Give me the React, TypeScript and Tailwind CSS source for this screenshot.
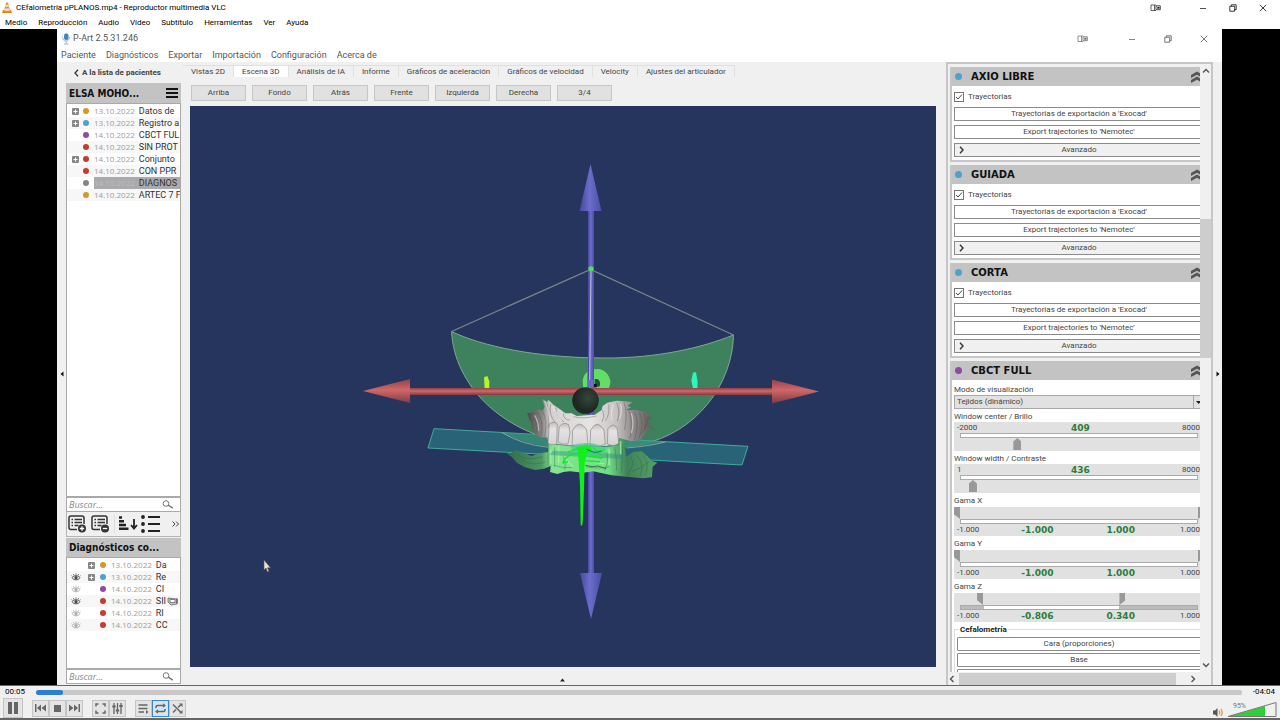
import React, { useState } from "react";

const ui = "font-[Roboto,sans-serif]";
const segoe = "font-['Open_Sans',sans-serif]";
const heading = "font-['DejaVu_Sans_Condensed','DejaVu_Sans',sans-serif]";
const verdana = "font-['DejaVu_Sans',sans-serif]";

type TreeItem = {
  date: string;
  name: string;
  color: string;
  expandable?: boolean;
  selected?: boolean;
  eye?: "on" | "off";
  badge?: boolean;
};

const ORANGE = "#d8962a";
const BLUE = "#4aa3cf";
const PURPLE = "#8e4aa8";
const RED = "#c93a2e";
const GRAY = "#858585";

const diagnostics: TreeItem[] = [
  { date: "13.10.2022", name: "Datos de", color: ORANGE, expandable: true },
  { date: "13.10.2022", name: "Registro a", color: BLUE, expandable: true },
  { date: "14.10.2022", name: "CBCT FUL", color: PURPLE },
  { date: "14.10.2022", name: "SIN PROT", color: RED },
  { date: "14.10.2022", name: "Conjunto", color: RED, expandable: true },
  { date: "14.10.2022", name: "CON PPR", color: RED },
  { date: "14.10.2022", name: "DIAGNOS", color: GRAY, selected: true },
  { date: "14.10.2022", name: "ARTEC 7 F", color: ORANGE },
];

const linked: TreeItem[] = [
  { date: "13.10.2022", name: "Da", color: ORANGE, expandable: true },
  { date: "13.10.2022", name: "Re", color: BLUE, expandable: true, eye: "on" },
  { date: "14.10.2022", name: "CI", color: PURPLE, eye: "off" },
  { date: "14.10.2022", name: "SII", color: RED, eye: "on", badge: true },
  { date: "14.10.2022", name: "RI", color: RED, eye: "off" },
  { date: "14.10.2022", name: "CC", color: RED, eye: "off" },
];

const vlcMenu = ["Medio", "Reproducción", "Audio", "Vídeo", "Subtítulo", "Herramientas", "Ver", "Ayuda"];
const appMenu = ["Paciente", "Diagnósticos", "Exportar", "Importación", "Configuración", "Acerca de"];
const tabs = [
  "Vistas 2D",
  "Escena 3D",
  "Análisis de IA",
  "Informe",
  "Gráficos de aceleración",
  "Gráficos de velocidad",
  "Velocity",
  "Ajustes del articulador",
];
const views = ["Arriba", "Fondo", "Atrás", "Frente", "Izquierda", "Derecha", "3/4"];

export default function App() {
  return (
    <div className={`flex h-screen flex-col overflow-hidden bg-white text-black ${ui}`}>
      <header>
        <div className="flex h-[15px] items-center pl-[2px] pr-[2px]">
          <ConeIcon />
          <h1 className="ml-[4px] flex-1 whitespace-nowrap text-[8px] leading-[15px]">
            CEfalometria pPLANOS.mp4 - Reproductor multimedia VLC
          </h1>
          <WindowButtons className="w-[30px]" castClass="mr-[18px]" color="#222" />
        </div>
        <nav className="flex h-[14px] items-center gap-[11px] pl-[5px] pt-px text-[8px]">
          {vlcMenu.map((m) => (
            <button key={m} className="leading-[14px]">{m}</button>
          ))}
        </nav>
      </header>
      <div className="flex min-h-0 flex-1 bg-black pl-[57px] pr-[58px]">
        <PArt />
      </div>
      <VlcControls />
    </div>
  );
}

function WindowButtons({ className, castClass, color }: { className: string; castClass: string; color: string }) {
  const base = `flex h-[15px] items-center justify-center ${className}`;
  return (
    <div className="flex">
      <button aria-label="Transmitir" className={`${base} ${castClass}`}>
        <svg width="11" height="8" viewBox="0 0 11 8" fill="none" stroke={color}>
          <path d="M6 1H1v5.500h5M4.500 1v5.500" strokeWidth=".7" />
          <path d="M6 1.800h4.300v3.900H6z" strokeWidth=".8" />
          <path d="M7.500 3h1.800v1.600H7.500z" fill={color} strokeWidth=".3" />
        </svg>
      </button>
      <button aria-label="Minimizar" className={base}>
        <svg width="8" height="8" viewBox="0 0 8 8" stroke={color}><path d="M1 4.500h6" strokeWidth=".8" /></svg>
      </button>
      <button aria-label="Restaurar" className={base}>
        <svg width="8" height="8" viewBox="0 0 8 8" fill="none" stroke={color} strokeWidth=".9">
          <path d="M.8 2.300h4.900v4.900H.8zM2.300 2.300V.8h4.900v4.900H5.700" />
        </svg>
      </button>
      <button aria-label="Cerrar" className={base}>
        <svg width="8" height="8" viewBox="0 0 8 8" stroke={color} strokeWidth=".9"><path d="M.8.8l6.400 6.400M7.200.8L.8 7.200" /></svg>
      </button>
    </div>
  );
}

function ConeIcon() {
  return (
    <svg width="10" height="12" viewBox="0 0 20 24">
      <path d="M2 16h16l2 6H0z" fill="#e8801c" />
      <path d="M8.500 1h3l5 17c-3 2-10 2-13 0z" fill="#f08a24" />
      <path d="M7.300 5.500h5.400l1.300 4H6zM5 13h10l1 3.500c-3 1.500-9 1.500-12 0z" fill="#e9e4dd" />
    </svg>
  );
}

function PArt() {
  return (
    <div className="flex min-w-0 flex-1 flex-col bg-[#f0f0f0]">
      <div className="flex h-[19px] items-center bg-white pl-[4px] text-[#555]">
        <svg width="10" height="12" viewBox="0 0 20 24">
          <rect x="6" y="1" width="9" height="13" rx="4" fill="#3f83c4" />
          <path d="M3 8c0 11 14 11 14 0M10.500 16v5M6 22h9" fill="none" stroke="#8fb6dd" strokeWidth="2" />
          <path d="M1 4h3M1 8h3" stroke="#cfdcec" strokeWidth="2" />
        </svg>
        <div className="ml-[2px] flex-1 text-[9px]">P-Art 2.5.31.246</div>
        <WindowButtons className="w-9" castClass="mr-[14px]" color="#666" />
      </div>
      <nav className="flex h-[14px] items-center gap-[10px] bg-white pl-[4px] text-[9px] text-[#555]">
        {appMenu.map((m) => (
          <button key={m} className="leading-[14px]">{m}</button>
        ))}
      </nav>
      <div className="flex min-h-0 flex-1 text-[8px] text-[#444]">
        <SideHandle dir="left" />
        <Sidebar />
        <Scene />
        <Properties />
        <SideHandle dir="right" />
      </div>
    </div>
  );
}

function SideHandle({ dir }: { dir: "left" | "right" }) {
  return (
    <button aria-label="Contraer panel" className="flex w-[9px] shrink-0 items-center justify-center">
      <svg width="4" height="6" viewBox="0 0 4 6">
        <path d={dir === "left" ? "M3.500.5v5L.5 3z" : "M.5.5v5l3-2.500z"} fill="#111" />
      </svg>
    </button>
  );
}

function Sidebar() {
  return (
    <aside className="flex w-[115px] shrink-0 flex-col pb-px pt-[4px]">
      <a href="#pacientes" className="flex h-[14px] items-center gap-[3px] pl-[8px] font-bold">
        <svg width="5" height="8" viewBox="0 0 5 8" fill="none" stroke="#333" strokeWidth="1.300"><path d="M4 .8L1 4l3 3.200" /></svg>
        A la lista de pacientes
      </a>
      <div className="mt-[3px] flex h-[20px] items-center justify-between bg-[#c3c3c3] px-[3px]">
        <h2 className={`whitespace-nowrap text-[10px] font-bold text-[#111] ${heading}`}>ELSA MOHO...</h2>
        <button aria-label="Menú">
          <svg width="12" height="10" viewBox="0 0 12 10" stroke="#111" strokeWidth="1.800"><path d="M0 1h12M0 5h12M0 9h12" /></svg>
        </button>
      </div>
      <ul className="min-h-0 flex-1 overflow-hidden border border-[#a9a9a9] bg-white pt-px">
        {diagnostics.map((item, i) => (
          <li key={i} className={`flex h-3 items-center whitespace-nowrap ${i % 2 ? "bg-[#f7f7f7]" : ""}`}>
            <span className="flex w-[16px] shrink-0 justify-center">{item.expandable && <Expander />}</span>
            <Dot color={item.color} />
            <ItemText item={item} className="ml-[5px] flex-1" />
          </li>
        ))}
      </ul>
      <SearchBox id="search-diagnostics" />
      <div className="flex h-[25px] items-center border border-t-0 border-[#b5b5b5] px-[1px]">
        <button aria-label="Añadir grupo"><ListIcon sign="plus" /></button>
        <button aria-label="Quitar grupo" className="ml-[4px]"><ListIcon sign="minus" /></button>
        <button aria-label="Ordenar" className="ml-[4px] border-l border-[#ddd] pl-[3px]">
          <svg width="20" height="18" viewBox="0 0 20 18" stroke="#222" strokeWidth="2.400" fill="none">
            <path d="M1 2.500h3M1 6.200h5M1 10h7M1 13.800h9.500" />
            <path d="M16 4v9M13 10l3 3.500 3-3.500" strokeWidth="1.800" />
          </svg>
        </button>
        <button aria-label="Lista" className="ml-[3px]">
          <svg width="19" height="18" viewBox="0 0 19 18" stroke="#222" strokeWidth="1.800" fill="#111">
            <path d="M7 2h12M7 9h12M7 16h12" />
            <circle cx="2" cy="2" r="1" /><circle cx="2" cy="9" r="1" /><circle cx="2" cy="16" r="1" />
          </svg>
        </button>
        <button aria-label="Más" className="ml-auto">
          <svg width="7" height="6" viewBox="0 0 7 6" fill="none" stroke="#444"><path d="M.5.5L3 3 .5 5.500M4 .5L6.500 3 4 5.500" /></svg>
        </button>
      </div>
      <h2 className={`mt-[1px] flex h-[19px] items-center whitespace-nowrap bg-[#c3c3c3] px-[3px] text-[10px] font-bold text-[#111] ${heading}`}>
        Diagnósticos co...
      </h2>
      <ul className="h-[112px] shrink-0 overflow-hidden border border-[#a9a9a9] bg-white pt-px">
        {linked.map((item, i) => (
          <li key={i} className={`flex h-3 items-center whitespace-nowrap pl-[4px] ${i % 2 ? "bg-[#f7f7f7]" : ""}`}>
            <span className="w-[11px] shrink-0">{item.eye && <Eye on={item.eye === "on"} />}</span>
            <span className="flex w-[18px] shrink-0 justify-center">{item.expandable && <Expander />}</span>
            <Dot color={item.color} />
            <ItemText item={item} className="ml-[5px] w-[56px]" />
            {item.badge && (
              <svg width="12" height="9" viewBox="0 0 12 9" fill="#ccc" stroke="#666" strokeWidth=".8">
                <path d="M1 1l9 1v5l-6 1-3-3z" /><path d="M3 2.500h5v3H3z" fill="#fff" /><path d="M10 1.500v5" strokeWidth="1.500" />
              </svg>
            )}
          </li>
        ))}
      </ul>
      <SearchBox id="search-linked" />
    </aside>
  );
}

function ItemText({ item, className }: { item: TreeItem; className: string }) {
  return (
    <span className={`flex items-center gap-[4px] leading-3 ${className} ${item.selected ? "bg-[#aaaaac]" : ""}`}>
      <span className={`text-[8px] ${segoe} ${item.selected ? "text-[#bcbcbc]" : "text-[#9c9c9c]"}`}>{item.date}</span>
      <span className="text-[9px] text-[#333]">{item.name}</span>
    </span>
  );
}

function Dot({ color }: { color: string }) {
  return <span className="size-[6px] shrink-0 rounded-full" style={{ backgroundColor: color }} />;
}

function Expander() {
  return (
    <button aria-label="Expandir" className="flex">
      <svg width="7" height="7" viewBox="0 0 7 7"><rect width="7" height="7" rx="1" fill="#868686" /><path d="M3.500 1.500v4M1.500 3.500h4" stroke="#fff" /></svg>
    </button>
  );
}

function Eye({ on }: { on: boolean }) {
  const c = on ? "#444" : "#aaa";
  return (
    <svg width="10" height="8" viewBox="0 0 10 8" fill="none" stroke={c} strokeWidth=".9">
      <path d="M1 4.800c2-2.800 6-2.800 8 0-2 2.700-6 2.700-8 0z" />
      <circle cx="5" cy="4.800" r="1.200" fill={c} />
      <path d="M5 .3v1.500M2.300 1l.7 1.500M7.700 1L7 2.500M.5 2.500l1 1M9.500 2.500l-1 1" strokeWidth=".7" />
    </svg>
  );
}

function ListIcon({ sign }: { sign: "plus" | "minus" }) {
  return (
    <svg width="19" height="18" viewBox="0 0 19 18" fill="none" stroke="#333">
      <path d="M9 14.500H3q-2 0-2-2V3q0-2 2-2h11q2 0 2 2v6" strokeWidth="1.500" />
      <path d="M3.500 4.500h1.500M3.500 7.500h1.500M3.500 10.500h1.500M6.500 4.500h7.500M6.500 7.500h7.500M6.500 10.500h4" strokeWidth="1.300" />
      <circle cx="14" cy="13.500" r="4" fill="#333" strokeWidth="0" />
      <path d={sign === "plus" ? "M14 11.300v4.400M11.800 13.500h4.400" : "M11.800 13.500h4.400"} stroke="#fff" strokeWidth="1.300" />
    </svg>
  );
}

function SearchBox({ id }: { id: string }) {
  return (
    <label htmlFor={id} className="flex h-[15px] shrink-0 items-center border border-[#a9a9a9] bg-white px-[2px]">
      <input
        id={id}
        placeholder="Buscar..."
        className={`min-w-0 flex-1 text-[9px] italic leading-[13px] outline-none placeholder:text-[#888] ${segoe}`}
      />
      <svg width="12" height="9" viewBox="0 0 12 9" fill="none" stroke="#777" className="mr-[4px]">
        <circle cx="4" cy="3.500" r="2.800" /><path d="M6.300 5.200l4.500 3" strokeWidth="1.500" />
      </svg>
    </label>
  );
}

function Scene() {
  const [tab, setTab] = useState("Escena 3D");
  return (
    <main className="flex min-w-0 flex-1 flex-col pl-[2px] pt-[3px]">
      <div role="tablist" className="flex h-[12px] whitespace-nowrap">
        {tabs.map((t) => (
          <button
            key={t}
            role="tab"
            aria-selected={t === tab}
            onClick={() => setTab(t)}
            className={`border-r border-t border-[#e0e0e0] px-[8px] leading-[10px] ${t === tab ? "bg-white" : ""}`}
          >
            {t}
          </button>
        ))}
      </div>
      <div className="flex gap-[6px] px-[8px] pb-[5px] pt-[8px]">
        {views.map((v) => (
          <button key={v} className="h-[16px] w-[55px] border border-[#c6c6c6] bg-[#e1e1e1] leading-[14px]">
            {v}
          </button>
        ))}
      </div>
      <div className="min-h-0 flex-1 pl-[7px] pr-[10px]">
        <Viewport />
      </div>
      <button aria-label="Expandir panel inferior" className="flex h-[18px] items-end justify-center pb-[3px] pr-[4px]">
        <svg width="5" height="4" viewBox="0 0 5 4"><path d="M0 3.500h5L2.500.5z" fill="#222" /></svg>
      </button>
    </main>
  );
}

function Viewport() {
  return (
    <svg className="h-full w-full bg-[#26355d]" viewBox="190 106 746 561" role="img" aria-label="Escena 3D">
      <defs>
        <linearGradient id="shaft" x1="0" x2="1">
          <stop offset="0" stopColor="#47479a" /><stop offset=".45" stopColor="#6c6ccd" /><stop offset="1" stopColor="#4d4da3" />
        </linearGradient>
        <linearGradient id="rod" x1="0" x2="0" y1="0" y2="1">
          <stop offset="0" stopColor="#8f4149" /><stop offset=".45" stopColor="#d06868" /><stop offset="1" stopColor="#7c3a40" />
        </linearGradient>
        <linearGradient id="bone" x1="0" x2="1">
          <stop offset="0" stopColor="#4b4848" /><stop offset=".12" stopColor="#8d8989" /><stop offset=".18" stopColor="#d5d1d1" />
          <stop offset=".5" stopColor="#e6e3e3" /><stop offset=".7" stopColor="#c6c2c2" /><stop offset=".84" stopColor="#8a8686" />
          <stop offset="1" stopColor="#5b5858" />
        </linearGradient>
        <linearGradient id="tooth" x1="0" x2="0" y1="0" y2="1">
          <stop offset="0" stopColor="#c2bebe" /><stop offset=".3" stopColor="#e4e2e2" /><stop offset="1" stopColor="#d4d2d2" />
        </linearGradient>
        <linearGradient id="gum" x1="0" x2="1">
          <stop offset="0" stopColor="#2f6a4a" /><stop offset=".24" stopColor="#4d9763" /><stop offset=".31" stopColor="#83e68f" />
          <stop offset=".68" stopColor="#72dc84" /><stop offset=".8" stopColor="#3f8257" /><stop offset="1" stopColor="#55a068" />
        </linearGradient>
        <radialGradient id="ball" cx=".6" cy=".4">
          <stop offset="0" stopColor="#35483a" /><stop offset="1" stopColor="#1f2723" />
        </radialGradient>
      </defs>

      {/* guide plane */}
      <path
        d="M451.500 331.500C482 346 535 358 606 358c52 0 95-10 127.500-23-1 50-38 98-91 109-24 6-51 5-76-1-66-12-112-58-115-111.500z"
        fill="#3d825d" stroke="#83a595" strokeWidth="1"
      />
      <path d="M451.500 331.500L590.500 269.500 733.500 335" fill="none" stroke="#75888d" strokeWidth="1.300" />

      {/* vertical axis */}
      <path d="M588 210h6v390h-6z" fill="url(#shaft)" />
      <path d="M590.500 164l11 47h-22zM591 619l11-46h-22z" fill="url(#shaft)" />
      <path d="M591 272l-1.500 116" stroke="#b9bdd8" strokeWidth="1" />
      <circle cx="591" cy="269" r="2.700" fill="#55dd55" />

      <g transform="translate(420 360) scale(.3333)">
        <path d="M488 66a40 40 0 0 1 14-31v49h-12zM522 28a40 40 0 0 1 45 56h-45z" fill="#62de66" />
        <path d="M524 58c14-6 20 12 14 22h-14z" fill="#23533a" />
        <path d="M522 72h8v10h-8z" fill="#111" />
        <path d="M192 52l10-4 6 16v20h-14z" fill="#b8f22c" />
        <path d="M819 38l9-2 5 30-1 18h-13l-5-22z" fill="#2ff5bb" />

        {/* occlusal plane */}
        <path d="M42 206l942 53-18 56-942-51z" fill="#2a7380" fillOpacity=".75" stroke="#3fae9b" strokeWidth="3" />
        <path d="M246 218l360 20 130 8c-60 14-160 22-240 20-110 2-190-18-250-48z" fill="#3d9a78" opacity=".65" />
        <path d="M246 218q60 36 140 44M620 264q70-6 116-18" fill="none" stroke="#83a595" strokeWidth="3" />

        {/* upper arch */}
        <path
          d="M322 160L340 155 352 148 368 152 374 140 366 116 380 126 386 120 400 134 418 146 436 160 455 160 470 168 500 166 525 164 545 150 548 138 562 128 590 122 612 124 638 126 622 138 634 142 618 150 645 150 668 154 690 160 684 168 698 176 684 182 690 196 704 212 688 202 676 222 660 240 635 244 612 238 598 234 590 250 560 258 500 256 450 256 386 250 382 232 362 232 345 224 336 206 334 190 328 180z"
          fill="url(#bone)"
        />
        <path
          d="M334 166q20 14 16 52M350 154q22 24 14 74M368 154q16 30 6 76M380 130q12 40 4 74M392 132q-6 34 14 56M408 142q-4 24 24 44M430 160q0 20 20 20M566 134q4 30-10 48M590 128q12 30 2 56M612 126q12 34 2 84M626 150q14 34 4 86M642 154q18 30 2 86M658 158q18 30-2 78M672 162q14 28-8 62M684 170q0 20-10 40M548 150q8 20-2 36M460 170q30 8 70-2"
          fill="none" stroke="#4a4748" strokeWidth="2" opacity=".55"
        />
        <path d="M374 122q14 30 16 66M398 140q10 20 26 42M580 132q-8 24-4 50M602 132q6 24-4 46M634 160q10 30 0 60M344 166q12 20 12 46" fill="none" stroke="#f1efef" strokeWidth="4" opacity=".5" />

        {/* lower arch */}
        <path
          d="M255 276L272 280 286 270 310 278 335 288 358 280 384 276 386 252 450 258 560 262 596 256 598 236 614 240 618 290 640 276 665 274 684 290 694 302 712 308 698 320 696 352 670 355 620 350 575 346 540 338 520 334 490 338 450 334 430 336 412 342 390 336 392 318 372 326 345 330 315 322 290 308 276 292z"
          fill="url(#gum)"
        />
        <path
          d="M290 282q30 24 78 8M306 300q30 20 70 6M384 262v56M404 262v58M430 290q10 20 4 40M560 276q8 30-6 56M584 262q6 30 6 70M606 250q4 40-2 90M632 290q16 24-10 54M650 286q26 26 10 62M670 286q20 26 6 60M400 316q30 10 60 6M498 320q40 8 70 0M686 306q-20 20-50 28"
          fill="none" stroke="#2a5f41" strokeWidth="2" opacity=".6"
        />
        <path d="M392 266v46M416 258v50M568 266v50M602 244v40M440 300l20 22M520 306l34 6" stroke="#a2f5a6" strokeWidth="5" opacity=".7" />

        {/* incisors and canines */}
        <g fill="url(#tooth)" stroke="#8a8686" strokeWidth="2">
          <path d="M388 192q14-10 24 0l-2 60q-14 6-26-2z" />
          <path d="M418 200q12-16 28-6l4 24-6 34q-16 4-30-6z" />
          <path d="M564 206q16-22 28 0l4 44q-14 12-34 2z" />
          <path d="M458 210q20-36 42 0l4 42q-24 12-48 2z" />
          <path d="M512 210q20-34 40 0l4 42q-20 12-46 2z" />
        </g>
        <path d="M398 272l212 11-2 14-218-12z" fill="#2f8b84" opacity=".45" />
        <path d="M450 258q60-22 110 8l-14 26-80-4z" fill="#47c98c" opacity=".7" />

        {/* contact traces */}
        <path d="M468 262l40-6 8 14-16 12-6 28-2 80-4 100-2 8-4-4-2-120-6-104z" fill="#0df218" />
        <path d="M428 310q10-30 50-30M444 276q30-14 60-8M500 276l50-4M506 290q20-2 40 6M496 302l44 4M520 264l24 24M428 310l16-6" fill="none" stroke="#12e92a" strokeWidth="4" />
        <path d="M496 316l20 4 18-2 24 8M500 268l24 10 20-4" fill="none" stroke="#18482b" strokeWidth="2" />
      </g>

      {/* horizontal axis */}
      <path d="M408 388h365v7H408z" fill="url(#rod)" />
      <path d="M363 391l47-12v24zM819 391.500l-47-12v24z" fill="url(#rod)" />
      <path d="M590.500 380v7.500" stroke="#6c6ccd" strokeWidth="6" />
      <circle cx="585.500" cy="400.500" r="13.300" fill="url(#ball)" />

      <path d="M264 560v10l2-2 1.500 4 1.500-.7-1.500-3.500h3z" fill="#e9e4cf" stroke="#555" strokeWidth=".6" />
    </svg>
  );
}

function Properties() {
  return (
    <aside className="flex w-[267px] shrink-0 flex-col border-x-2 border-t-2 border-[#c6c6c6]">
      <div className="flex min-h-0 flex-1">
        <div className="min-w-0 flex-1 overflow-hidden pl-[2px] pt-[3px]">
          {/* content runs a little wider than the scroll area */}
          <div className="-mr-[8px] flex flex-col gap-[3px]">
            <TrajectoryCard title="AXIO LIBRE" />
            <TrajectoryCard title="GUIADA" />
            <TrajectoryCard title="CORTA" />
            <CbctCard />
          </div>
        </div>
        <div className="flex w-[11px] shrink-0 flex-col items-center bg-[#f0f0f0] py-[3px]">
          <ScrollArrow d="M1 5.500L4 2.500l3 3" label="Subir" />
          <div className="mt-[144px] h-[139px] w-[11px] bg-[#cdcdcd]" />
          <div className="flex-1" />
          <ScrollArrow d="M1 2.500l3 3 3-3" label="Bajar" />
        </div>
      </div>
      <div className="flex h-[13px] shrink-0 items-center pr-[14px]">
        <ScrollArrow d="M5.500 1L2.500 4l3 3" label="Izquierda" />
        <div className="ml-[3px] h-[12px] flex-1 bg-[#cdcdcd]" />
        <span className="w-[13px]" />
        <ScrollArrow d="M2.500 1l3 3-3 3" label="Derecha" />
      </div>
    </aside>
  );
}

function ScrollArrow({ d, label }: { d: string; label: string }) {
  return (
    <button aria-label={label}>
      <svg width="8" height="8" viewBox="0 0 8 8" fill="none" stroke="#555" strokeWidth="1.400"><path d={d} /></svg>
    </button>
  );
}

function Card({ title, color, children }: { title: string; color: string; children: React.ReactNode }) {
  return (
    <section className="border-x-2 border-b-2 border-[#c6c6c6] bg-white">
      <header className="flex h-[19px] items-center bg-[#c3c3c3] pl-[3px] pr-[3px]">
        <span className="size-[7px] rounded-full" style={{ backgroundColor: color }} />
        <h2 className={`ml-[9px] flex-1 text-[10px] font-bold text-[#111] ${verdana}`}>{title}</h2>
        <button aria-label="Contraer">
          <svg width="12" height="12" viewBox="0 0 12 12" fill="#555"><path d="M0 4l6-3.500L12 4v3L6 3.800 0 7zM0 9l6-3.500L12 9v3L6 8.800 0 12z" /></svg>
        </button>
      </header>
      {children}
    </section>
  );
}

function TrajectoryCard({ title }: { title: string }) {
  const [on, setOn] = useState(true);
  const button = "h-[14px] w-full border border-[#8a8a8a] bg-white leading-[12px]";
  return (
    <Card title={title} color={BLUE}>
      <div className="flex flex-col gap-[4px] px-[2px] pb-[3px] pt-[5px]">
        <label className="flex h-[12px] items-center gap-[4px]">
          <input
            type="checkbox"
            checked={on}
            onChange={(e) => setOn(e.target.checked)}
            className="peer size-[10px] appearance-none border border-[#777] bg-white"
          />
          <svg width="8" height="8" viewBox="0 0 8 8" fill="none" stroke="#444" className="-ml-[13px] mr-[1px] hidden peer-checked:block">
            <path d="M1 4l2 2 4-4.500" />
          </svg>
          Trayectorias
        </label>
        <button className={button}>Trayectorias de exportación a 'Exocad'</button>
        <button className={button}>Export trajectories to 'Nemotec'</button>
        <button className="relative h-[14px] w-full border border-[#8a8a8a] bg-[#f0f0f0] leading-[12px]">
          <svg width="5" height="8" viewBox="0 0 5 8" fill="none" stroke="#333" strokeWidth="1.400" className="absolute left-[4px] top-[2px]">
            <path d="M1 .8L4 4 1 7.200" />
          </svg>
          Avanzado
        </button>
      </div>
    </Card>
  );
}

function CbctCard() {
  const button = "h-[14px] w-full rounded-[1px] border border-[#8a8a8a] bg-white leading-[12px]";
  return (
    <Card title="CBCT FULL" color={PURPLE}>
      <div className="px-[2px] pb-[3px] pt-[4px]">
        <label htmlFor="mode" className="block h-[11px] leading-[11px]">Modo de visualización</label>
        <div className="flex h-[14px] border border-[#a8a8a8] bg-[#e1e1e1]">
          <select id="mode" className="min-w-0 flex-1 appearance-none pl-[2px] leading-[12px] outline-none">
            <option>Tejidos (dinámico)</option>
          </select>
          <span className="flex w-[10px] items-center justify-center border-l border-[#a8a8a8]">
            <svg width="5" height="3" viewBox="0 0 5 3"><path d="M0 0h5L2.500 3z" fill="#222" /></svg>
          </span>
        </div>
        <SingleSlider id="center" label="Window center / Brillo" min={-2000} max={8000} initial={409} />
        <SingleSlider id="width" label="Window width / Contraste" min={1} max={8000} initial={436} />
        <RangeSlider id="gx" label="Gama X" from={-1} to={1} />
        <RangeSlider id="gy" label="Gama Y" from={-1} to={1} />
        <RangeSlider id="gz" label="Gama Z" from={-0.806} to={0.34} />
        <fieldset className="mt-[2px] flex flex-col gap-[2px] border border-[#ddd] px-[2px] pt-[2px]">
          <legend className="ml-[2px] px-[1px] font-bold leading-[11px] text-[#222]">Cefalometría</legend>
          <button className={button}>Cara (proporciones)</button>
          <button className={button}>Base</button>
          <button aria-label="Análisis" className={button} />
        </fieldset>
      </div>
    </Card>
  );
}

const valueText = `text-[9px] font-bold text-[#2a7d3a] ${verdana}`;

function SingleSlider({ id, label, min, max, initial }: { id: string; label: string; min: number; max: number; initial: number }) {
  const [value, setValue] = useState(initial);
  return (
    <div>
      <label htmlFor={id} className="block h-[13px] leading-[15px]">{label}</label>
      <div className="h-[29px] bg-[#e1e1e1]">
        <div className="grid h-[11px] grid-cols-3 items-center pl-[3px]">
          <span>{min}</span>
          <output htmlFor={id} className={`text-center leading-[11px] ${valueText}`}>{value}</output>
          <span className="pr-[4px] text-right">{max}</span>
        </div>
        <div className="grid">
          <div className="mx-[6px] h-[5px] border border-[#aaa] bg-white [grid-area:1/1]" />
          <input
            id={id}
            type="range"
            min={min}
            max={max}
            value={value}
            onChange={(e) => setValue(Number(e.target.value))}
            className="mx-[2px] h-[17px] appearance-none bg-transparent [grid-area:1/1] [&::-webkit-slider-runnable-track]:h-[17px] [&::-webkit-slider-thumb]:mt-[5px] [&::-webkit-slider-thumb]:h-[12px] [&::-webkit-slider-thumb]:w-[8px] [&::-webkit-slider-thumb]:appearance-none [&::-webkit-slider-thumb]:bg-[#989898] [&::-webkit-slider-thumb]:[clip-path:polygon(50%_0,100%_30%,100%_100%,0_100%,0_30%)]"
          />
        </div>
      </div>
    </div>
  );
}

function RangeSlider({ id, label, from, to }: { id: string; label: string; from: number; to: number }) {
  const [lo, setLo] = useState(from);
  const [hi, setHi] = useState(to);
  const left = ((lo + 1) / 2) * 100;
  const right = ((1 - hi) / 2) * 100;
  const thumb =
    "pointer-events-none h-[12px] appearance-none bg-transparent [grid-area:1/1] [&::-webkit-slider-runnable-track]:h-[12px] [&::-webkit-slider-thumb]:pointer-events-auto [&::-webkit-slider-thumb]:h-[12px] [&::-webkit-slider-thumb]:w-[6px] [&::-webkit-slider-thumb]:appearance-none [&::-webkit-slider-thumb]:bg-[#989898]";
  return (
    <div>
      <label htmlFor={`${id}-lo`} className="block h-[14px] leading-[16px]">{label}</label>
      <div className="h-[29px] bg-[#e1e1e1]">
        <div className="grid">
          <input
            id={`${id}-lo`}
            type="range" min={-1} max={1} step={0.001} value={lo}
            onChange={(e) => setLo(Number(e.target.value))}
            className={`mr-[6px] ${thumb} [&::-webkit-slider-thumb]:[clip-path:polygon(0_0,100%_0,100%_100%,0_60%)]`}
          />
          <input
            aria-label={`${label} máximo`}
            type="range" min={-1} max={1} step={0.001} value={hi}
            onChange={(e) => setHi(Number(e.target.value))}
            className={`ml-[6px] ${thumb} [&::-webkit-slider-thumb]:[clip-path:polygon(0_0,100%_0,100%_60%,0_100%)]`}
          />
        </div>
        <div className="mx-[6px] flex h-[5px] border border-[#aaa] bg-[#bbb]">
          <span style={{ width: `${left}%` }} />
          <span className="flex-1 bg-white" />
          <span style={{ width: `${right}%` }} />
        </div>
        <div className="grid h-[11px] grid-cols-6 items-center">
          <span className="pl-[3px]">-1.000</span>
          <output className={`col-span-2 text-center leading-[11px] ${valueText}`}>{lo.toFixed(3)}</output>
          <output className={`col-span-2 text-center leading-[11px] ${valueText}`}>{hi.toFixed(3)}</output>
          <span className="pr-[4px] text-right">1.000</span>
        </div>
      </div>
    </div>
  );
}

const iconProps = { width: 11, height: 11, viewBox: "0 0 11 11", fill: "none", stroke: "#666", strokeWidth: 1.5 };

function VlcControls() {
  const btn = "flex size-[17px] items-center justify-center border border-[#c4c4c4] bg-[#e4e4e4]";
  return (
    <footer className="shrink-0 border-t border-[#666] bg-[#f0f0f0] text-[8px]">
      <div className="flex h-[12px] items-center gap-[10px] px-[5px]">
        <span className="w-[21px]">00:05</span>
        <progress
          aria-label="Posición"
          value={5}
          max={222}
          className="h-[5px] flex-1 appearance-none overflow-hidden rounded-[2px] [&::-webkit-progress-bar]:bg-[#c8c8c8] [&::-webkit-progress-value]:rounded-[2px] [&::-webkit-progress-value]:bg-[#2a7fd4]"
        />
        <span className="w-[23px] text-right">-04:04</span>
      </div>
      <div className="flex h-[22px] items-center border-b-2 border-[#666] pl-[3px]">
        <button aria-label="Pausa" className="flex size-[20px] items-center justify-center border border-[#c4c4c4] bg-[#e4e4e4]">
          <svg width="12" height="12" viewBox="0 0 12 12" fill="#666"><path d="M1 0h4v12H1zM7 0h4v12H7z" /></svg>
        </button>
        <div className="ml-[9px] flex">
          <button aria-label="Anterior" className={btn}>
            <svg width="11" height="8" viewBox="0 0 11 8" fill="#666"><path d="M0 0h1.500v8H0zM6 .5v7L2 4zM11 .5v7L6.500 4z" /></svg>
          </button>
          <button aria-label="Detener" className={btn}>
            <svg width="7" height="7" viewBox="0 0 7 7" fill="#666"><path d="M0 0h7v7H0z" /></svg>
          </button>
          <button aria-label="Siguiente" className={btn}>
            <svg width="11" height="8" viewBox="0 0 11 8" fill="#666"><path d="M9.500 0H11v8H9.500zM5 .5v7L9 4zM0 .5v7L4.500 4z" /></svg>
          </button>
        </div>
        <div className="ml-[9px] flex">
          <button aria-label="Pantalla completa" className={btn}>
            <svg {...iconProps}><path d="M3.500 1H1v2.500M7.500 1H10v2.500M3.500 10H1V7.500M7.500 10H10V7.500" /></svg>
          </button>
          <button aria-label="Ajustes extendidos" className={btn}>
            <svg {...iconProps}><path d="M2 0v11M5.500 0v11M9 0v11" strokeWidth="1.300" /><path d="M.3 3.500h3.400M3.800 7.500h3.400M7.300 3h3.400" strokeWidth="2" /></svg>
          </button>
        </div>
        <div className="ml-[9px] flex">
          <button aria-label="Lista" className={btn}>
            <svg {...iconProps}><path d="M.5 2h9M.5 5.500h9M.5 9h5.500" /><path d="M8 7l2.500 2L8 11z" fill="#666" strokeWidth="0" /></svg>
          </button>
          <button aria-label="Bucle" className="flex size-[17px] items-center justify-center border border-[#3a86c8] bg-[#d4e6f5]">
            <svg {...iconProps}><path d="M1 5V4q0-1.500 1.500-1.500H9M10 6v1q0 1.500-1.500 1.500H2" /><path d="M8 .3l3 2.200-3 2.200zM3 6.300L0 8.500l3 2.200z" fill="#666" strokeWidth="0" /></svg>
          </button>
          <button aria-label="Aleatorio" className={btn}>
            <svg {...iconProps}><path d="M1 1.500l8 8M1 9.500l3-3M6 4.500l3-3" /><path d="M7 .5h3.500V4zM7 10.500h3.500V7z" fill="#666" strokeWidth="0" /></svg>
          </button>
        </div>
        <button aria-label="Silenciar" className="ml-auto mt-[9px]">
          <svg width="10" height="9" viewBox="0 0 10 9" fill="none" stroke="#eb9430" strokeWidth="1.300"><path d="M0 2.500h2L4.500 0v9L2 6.500H0z" fill="#555" strokeWidth="0" /><path d="M6 2.500q1.300 2 0 4M8 1q2.300 3.500 0 7" /></svg>
        </button>
        <svg width="50" height="17" viewBox="0 0 50 17" className="ml-[4px] mr-[3px] mt-[2px]" role="img" aria-label="Volumen 95%">
          <path d="M1 15.500L38 5v10.500z" fill="#2fcf3a" />
          <path d="M1 15.500L49 1.500v14z" fill="none" stroke="#777" />
          <text x="6" y="7" fontSize="7" fill="#777">95%</text>
        </svg>
      </div>
    </footer>
  );
}
